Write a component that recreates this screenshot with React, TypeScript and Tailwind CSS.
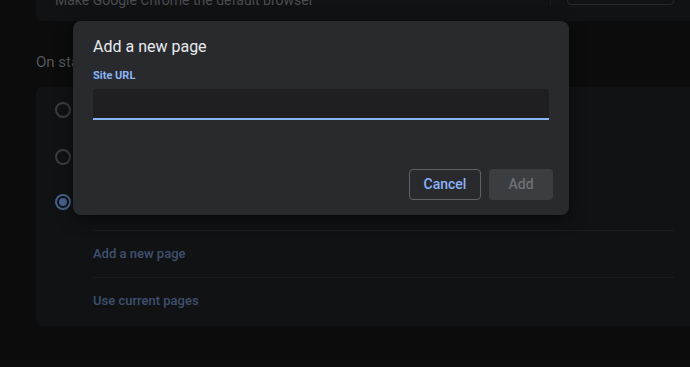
import React from "react";

const Radio = ({ checked }: { checked?: boolean }) => (
  <div
    className={`w-4 h-4 rounded-full border-2 flex items-center justify-center shrink-0 ${
      checked ? "border-[#45618a]" : "border-[#3c3d40]"
    }`}
  >
    {checked && <div className="w-2 h-2 rounded-full bg-[#45618a]" />}
  </div>
);

const App = () => {
  return (
    <div
      className="relative w-[690px] h-[367px] overflow-hidden bg-[#0c0c0d]"
      style={{ fontFamily: "Roboto, 'Liberation Sans', sans-serif" }}
    >
      {/* settings page behind the scrim */}
      <div className="pl-9">
        <div className="-mt-[27px] h-12 bg-[#111214] rounded-l-md flex items-start pl-[19px]">
          <span className="pt-[17px] text-[14px] leading-5 text-[#4b4c4f] flex-1">
            Make Google Chrome the default browser
          </span>
          <div className="w-px h-8 bg-[#1c1d20] mr-4" />
          <div className="w-[107px] h-8 border border-[#2a2b2e] rounded mr-4" />
        </div>

        <h2 className="mt-[31px] text-[15px] text-[#55575a] leading-5">On startup</h2>

        <div className="mt-[15px] bg-[#111214] rounded-l-md pb-[2px]">
          <div className="h-[46px] pl-[19px] flex items-center">
            <Radio />
          </div>
          <div className="h-[47px] pl-[19px] flex items-center">
            <Radio />
          </div>
          <div className="h-[50px] pl-[19px] pt-[14px]">
            <Radio checked />
          </div>
          <div className="pl-[57px] pr-4">
            <div className="h-[47px] border-t border-[#1a1b1e] flex items-center text-[13px] font-medium text-[#3f5070]">
              Add a new page
            </div>
            <div className="h-[47px] border-t border-[#1a1b1e] flex items-center text-[13px] font-medium text-[#3f5070]">
              Use current pages
            </div>
          </div>
        </div>
      </div>

      {/* dialog */}
      <div className="absolute left-[73px] top-[21px] w-[496px] h-[194px] bg-[#292a2d] rounded-lg shadow-[0_4px_16px_rgba(0,0,0,0.5)] pt-[16px] pl-5 pr-4">
        <div className="text-[16px] text-[#e8eaed] leading-5">Add a new page</div>
        <div className="mt-[12px] text-[11px] font-bold text-[#8ab4f8] leading-[14px]">Site URL</div>
        <div className="mt-[6px] mr-1 h-[31px] bg-[#1f1f21] rounded-t border-b-2 border-[#8ab4f8]" />
        <div className="mt-[49px] flex justify-end gap-2">
          <button className="w-[72px] h-[31px] rounded border border-[#5f6368] text-[14px] font-medium text-[#8ab4f8]">
            Cancel
          </button>
          <button className="w-[64px] h-[31px] rounded bg-[#3b3d40] text-[14px] font-medium text-[#6d7074]">
            Add
          </button>
        </div>
      </div>
    </div>
  );
};

export default App;
